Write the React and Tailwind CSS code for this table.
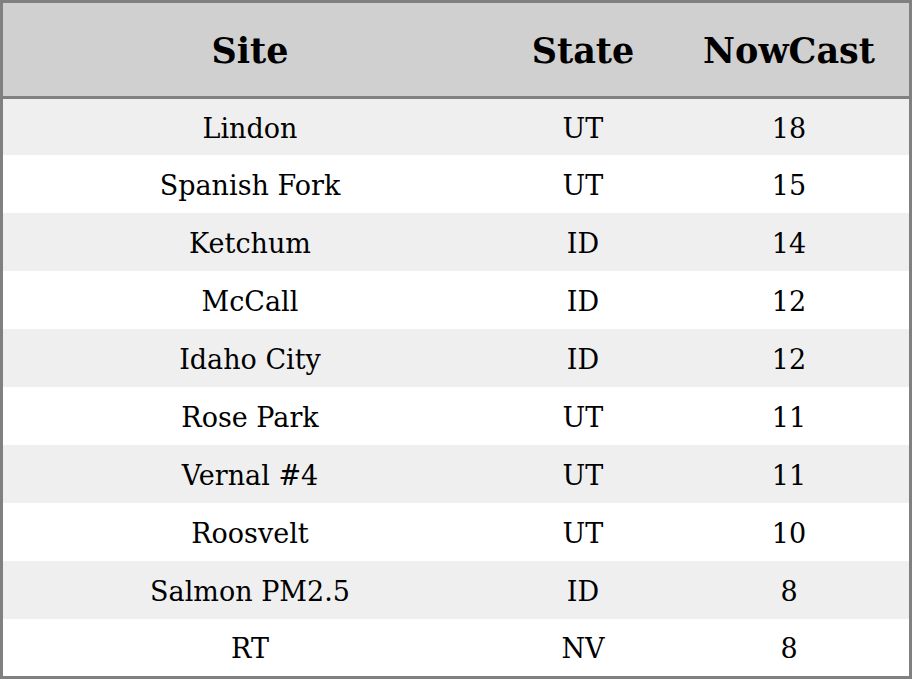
const rows = [
  ["Lindon", "UT", "18"],
  ["Spanish Fork", "UT", "15"],
  ["Ketchum", "ID", "14"],
  ["McCall", "ID", "12"],
  ["Idaho City", "ID", "12"],
  ["Rose Park", "UT", "11"],
  ["Vernal #4", "UT", "11"],
  ["Roosvelt", "UT", "10"],
  ["Salmon PM2.5", "ID", "8"],
  ["RT", "NV", "8"],
];

function rowHeight(i) {
  if (i === 0) return "h-[56px]";
  if (i === rows.length - 1) return "flex-1";
  return "h-[58px]";
}

export default function App() {
  return (
    <div
      className="w-[912px] h-[679px] border-[3px] border-[#808080] flex flex-col text-black bg-white"
      style={{ fontFamily: '"DejaVu Serif", serif' }}
    >
      <div className="h-[96px] shrink-0 pt-1 bg-[#d0d0d0] border-b-[3px] border-[#808080] grid grid-cols-[494px_172px_240px] items-center text-[35px] font-bold">
        <div className="text-center">Site</div>
        <div className="text-center">State</div>
        <div className="text-center">NowCast</div>
      </div>
      <div className="flex-1 flex flex-col">
        {rows.map((r, i) => (
          <div
            key={i}
            className={`${rowHeight(i)} pt-1 grid grid-cols-[494px_172px_240px] items-center text-[27px] ${i % 2 === 0 ? "bg-[#efefef]" : "bg-white"}`}
          >
            <div className="text-center">{r[0]}</div>
            <div className="text-center">{r[1]}</div>
            <div className="text-center">{r[2]}</div>
          </div>
        ))}
      </div>
    </div>
  );
}
